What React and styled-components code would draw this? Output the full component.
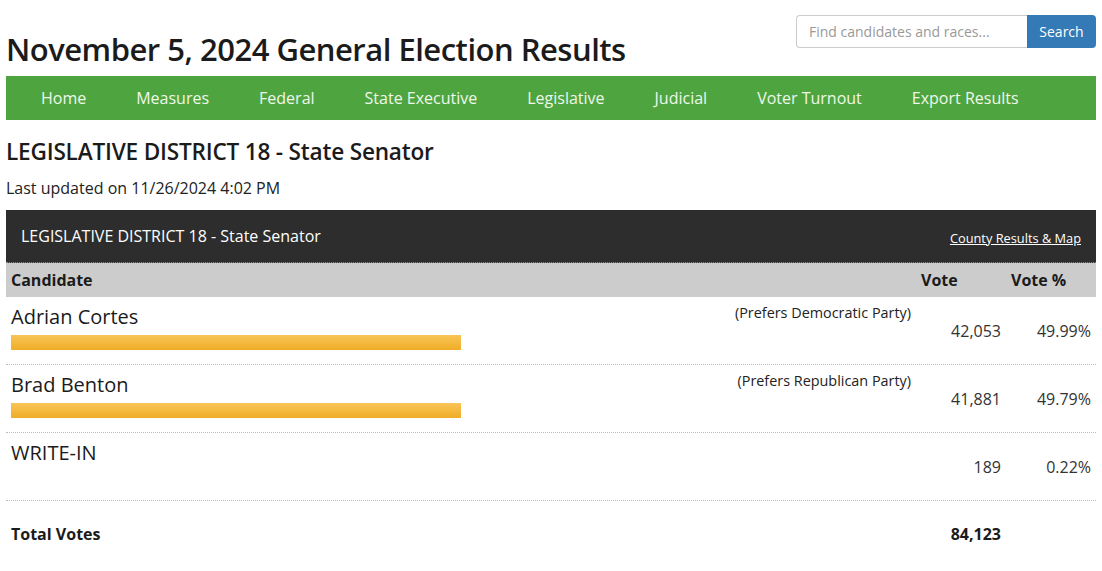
import React from 'react'
import styled, { createGlobalStyle } from 'styled-components'

const GlobalStyle = createGlobalStyle`
  body {
    margin: 0;
    font-family: "Open Sans", "Liberation Sans", sans-serif;
    color: #222;
    background: #fff;
  }
`

const Page = styled.div`
  padding: 0 6px;
`

const TopBar = styled.header`
  display: flex;
  justify-content: space-between;
  align-items: flex-start;
  height: 76px;
`

const Title = styled.h1`
  margin: 29px 0 0;
  font-size: 31px;
  font-weight: 600;
  letter-spacing: -0.5px;
  line-height: 40px;
  color: #1b1b1b;
`

const SearchForm = styled.form`
  display: flex;
  margin-top: 15px;
`

const SearchInput = styled.input`
  width: 231px;
  height: 33px;
  box-sizing: border-box;
  border: 1px solid #ccc;
  border-right: none;
  border-radius: 4px 0 0 4px;
  padding: 0 12px;
  font-family: inherit;
  font-size: 14px;
  color: #555;
  &::placeholder { color: #999; }
`

const SearchButton = styled.button`
  height: 33px;
  width: 69px;
  border: none;
  border-radius: 0 4px 4px 0;
  background: #337ab7;
  color: #fff;
  font-family: inherit;
  font-size: 14px;
`

const Nav = styled.nav`
  display: flex;
  align-items: center;
  height: 44px;
  padding-left: 10px;
  background: #4ea53f;
`

const NavItem = styled.a`
  padding: 0 25px;
  color: #eef7ea;
  font-size: 16px;
  text-decoration: none;
`

const RaceTitle = styled.h2`
  margin: 17px 0 0;
  font-size: 22.6px;
  font-weight: 600;
  line-height: 30px;
  letter-spacing: -0.2px;
  color: #1b1b1b;
`

const Updated = styled.p`
  margin: 10px 0 0;
  font-size: 16px;
  line-height: 22px;
  color: #222;
`

const Panel = styled.section`
  margin-top: 11px;
`

const PanelHead = styled.div`
  display: flex;
  justify-content: space-between;
  align-items: center;
  height: 52px;
  padding: 0 15px;
  background: #2d2d2d;
  color: #fff;
  font-size: 16px;
  border-bottom: 1px dotted #888;
`

const MapLink = styled.a`
  color: #fff;
  font-size: 12.8px;
  text-decoration: underline;
  margin-top: 3px;
`

const Row = styled.div`
  display: grid;
  grid-template-columns: 1fr 90px 90px;
  height: ${p => p.$h || 68}px;
  box-sizing: border-box;
  background: ${p => p.$head ? '#ccc' : 'transparent'};
  border-bottom: ${p => p.$line ? '1px dotted #bbb' : 'none'};
  font-weight: ${p => p.$bold ? 700 : 400};
  font-size: 16px;
  color: #1b1b1b;
`

const Cell = styled.div`
  padding: ${p => p.$pad || '0'} 5px 0;
  text-align: ${p => p.$right ? 'right' : 'left'};
  line-height: 22px;
  color: ${p => p.$soft ? '#333' : 'inherit'};
`

const HeadCell = styled.div`
  padding: 6px 0 0 ${p => p.$indent}px;
  line-height: 22px;
`

const CandidateCell = styled.div`
  display: grid;
  grid-template-columns: 450px 1fr;
  align-content: start;
  padding: 8px 5px 0;
`

const Name = styled.div`
  font-size: 20px;
  font-weight: 500;
  line-height: 24px;
  color: #1b1b1b;
`

const Party = styled.div`
  text-align: right;
  font-size: 14.4px;
  line-height: 16px;
  color: #222;
`

const Bar = styled.div`
  grid-column: 1 / 2;
  height: 15px;
  margin-top: 6px;
  background: linear-gradient(#f8c557, #f0ad26);
`

const candidates = [
  { name: 'Adrian Cortes', party: '(Prefers Democratic Party)', votes: '42,053', pct: '49.99%', bar: 100 },
  { name: 'Brad Benton', party: '(Prefers Republican Party)', votes: '41,881', pct: '49.79%', bar: 100 },
  { name: 'WRITE-IN', party: '', votes: '189', pct: '0.22%', bar: 0 },
]

const navItems = ['Home', 'Measures', 'Federal', 'State Executive', 'Legislative', 'Judicial', 'Voter Turnout', 'Export Results']

export default function App() {
  return (
    <Page>
      <GlobalStyle />
      <TopBar>
        <Title>November 5, 2024 General Election Results</Title>
        <SearchForm onSubmit={e => e.preventDefault()}>
          <SearchInput placeholder="Find candidates and races..." />
          <SearchButton>Search</SearchButton>
        </SearchForm>
      </TopBar>
      <Nav>
        {navItems.map(n => <NavItem key={n} href="#">{n}</NavItem>)}
      </Nav>
      <RaceTitle>LEGISLATIVE DISTRICT 18 - State Senator</RaceTitle>
      <Updated>Last updated on 11/26/2024 4:02 PM</Updated>
      <Panel>
        <PanelHead>
          <span>LEGISLATIVE DISTRICT 18 - State Senator</span>
          <MapLink href="#">County Results &amp; Map</MapLink>
        </PanelHead>
        <Row $head $bold $h={34}>
          <HeadCell $indent={5}>Candidate</HeadCell>
          <HeadCell $indent={5}>Vote</HeadCell>
          <HeadCell $indent={5}>Vote %</HeadCell>
        </Row>
        {candidates.map(c => (
          <Row key={c.name} $line>
            <CandidateCell>
              <Name>{c.name}</Name>
              <Party>{c.party}</Party>
              {c.bar > 0 && <Bar />}
            </CandidateCell>
            <Cell $pad="23px" $right $soft>{c.votes}</Cell>
            <Cell $pad="23px" $right $soft>{c.pct}</Cell>
          </Row>
        ))}
        <Row $bold $h={60}>
          <Cell $pad="22px">Total Votes</Cell>
          <Cell $pad="22px" $right>84,123</Cell>
          <Cell />
        </Row>
      </Panel>
    </Page>
  )
}
